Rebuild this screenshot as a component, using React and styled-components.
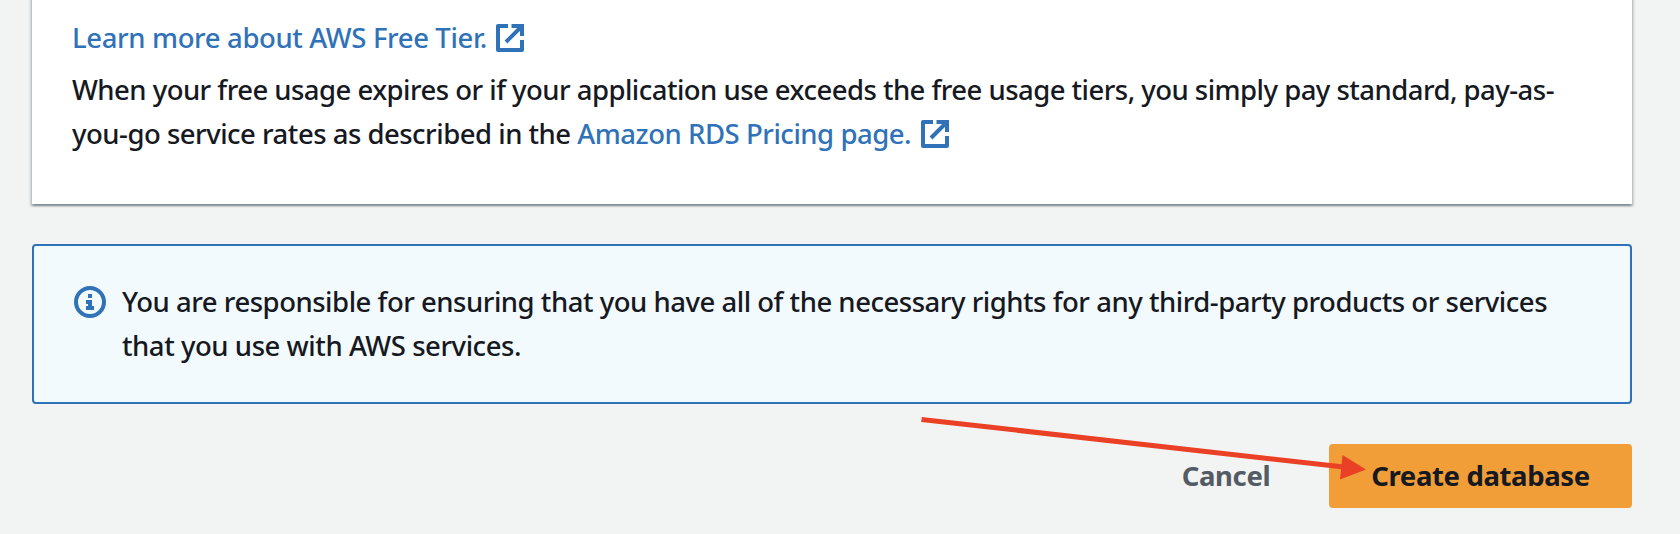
import React from "react";
import styled, { createGlobalStyle } from "styled-components";

const GlobalStyle = createGlobalStyle`
  *, *::before, *::after { box-sizing: border-box; }
  body {
    margin: 0;
    background: #f2f4f3;
    color: #16191f;
    font-family: "Noto Sans", "Open Sans", sans-serif;
    font-size: 27.5px;
    font-weight: 500;
    line-height: 44px;
  }
`;

const Page = styled.main`
  position: relative;
  width: 1680px;
  height: 534px;
  padding: 0 48px 0 32px;
  overflow: hidden;
  display: flex;
  flex-direction: column;
`;

const Card = styled.section`
  flex: none;
  height: 214px;
  margin-top: -10px;
  padding: 26px 40px 0;
  background: #fff;
  box-shadow: 0 2px 2px rgba(0, 28, 36, 0.3), 2px 2px 2px rgba(0, 28, 36, 0.15),
    -2px 2px 2px rgba(0, 28, 36, 0.15);
`;

const Paragraph = styled.p`
  margin: 0 0 8px;
`;

const Line = styled.span`
  display: block;
  height: 44px;
  white-space: nowrap;
  letter-spacing: ${(p) => p.$tracking || 0}px;
`;

const Link = styled.a`
  color: #3072b8;
  letter-spacing: ${(p) => p.$tracking || 0}px;
  text-decoration: none;
`;

const LinkIcon = styled.svg`
  display: inline-block;
  width: 28px;
  height: 28px;
  margin-left: ${(p) => p.$gap}px;
  vertical-align: -4px;
`;

const Alert = styled.section`
  display: flex;
  gap: 16px;
  height: 160px;
  margin-top: 40px;
  padding: 34px 40px;
  background: #f2fafd;
  border: 2px solid #3072b8;
  border-radius: 4px;
`;

const InfoIcon = styled.svg`
  flex: none;
  width: 32px;
  height: 32px;
  margin-top: 6px;
`;

const Actions = styled.footer`
  display: flex;
  justify-content: flex-end;
  margin-top: 40px;
`;

const Button = styled.button`
  width: ${(p) => p.$width}px;
  height: 64px;
  padding: 0;
  border: 0;
  border-radius: 4px;
  background: ${(p) => (p.$primary ? "#f19e38" : "transparent")};
  color: ${(p) => (p.$primary ? "#16191f" : "#545b64")};
  font: 700 27.5px/64px "Noto Sans", "Open Sans", sans-serif;
  letter-spacing: ${(p) => p.$tracking || 0}px;
  white-space: nowrap;
`;

const Arrow = styled.svg`
  position: absolute;
  left: 910px;
  top: 410px;
  width: 470px;
  height: 80px;
  pointer-events: none;
`;

const External = ({ gap = 10 }) => (
  <LinkIcon $gap={gap} viewBox="0 0 28 28" fill="none" stroke="#3072b8" strokeWidth="4">
    <path d="M12 2H2V26H26V16" strokeLinejoin="round" />
    <path d="M15.5 2H26V12M26 2L10 18" />
  </LinkIcon>
);

export default function App() {
  return (
    <>
      <GlobalStyle />
      <Page>
        <Card>
          <Paragraph>
            <Line>
              <Link href="#" $tracking={-0.37}>Learn more about AWS Free Tier.<External gap={9} /></Link>
            </Line>
          </Paragraph>
          <Paragraph>
            <Line $tracking={-0.53}>
              When your free usage expires or if your application use exceeds the free usage tiers, you simply pay standard, pay-as-
            </Line>
            <Line $tracking={-0.5}>
              you-go service rates as described in the{" "}
              <Link href="#" $tracking={-0.47}>Amazon RDS Pricing page.<External /></Link>
            </Line>
          </Paragraph>
        </Card>
        <Alert>
          <InfoIcon viewBox="0 0 32 32">
            <circle cx="16" cy="16" r="14" fill="none" stroke="#3072b8" strokeWidth="4" />
            <path d="M14 8h4v4h-4zM12 14h6v6h2v4h-8v-4h2v-2h-2z" fill="#3072b8" />
          </InfoIcon>
          <div>
            <Line $tracking={-0.48}>
              You are responsible for ensuring that you have all of the necessary rights for any third-party products or services
            </Line>
            <Line $tracking={-0.45}>that you use with AWS services.</Line>
          </div>
        </Alert>
        <Actions>
          <Button $width={206} $tracking={-0.35}>Cancel</Button>
          <Button $primary $width={303} $tracking={-0.37}>Create database</Button>
        </Actions>
        <Arrow viewBox="910 410 470 80">
          <path d="M921.5 419.5L1344 467" stroke="#ea4025" strokeWidth="5" />
          <path d="M1342.500 455L1366 469.5L1340 479.5Z" fill="#ea4025" />
        </Arrow>
      </Page>
    </>
  );
}
